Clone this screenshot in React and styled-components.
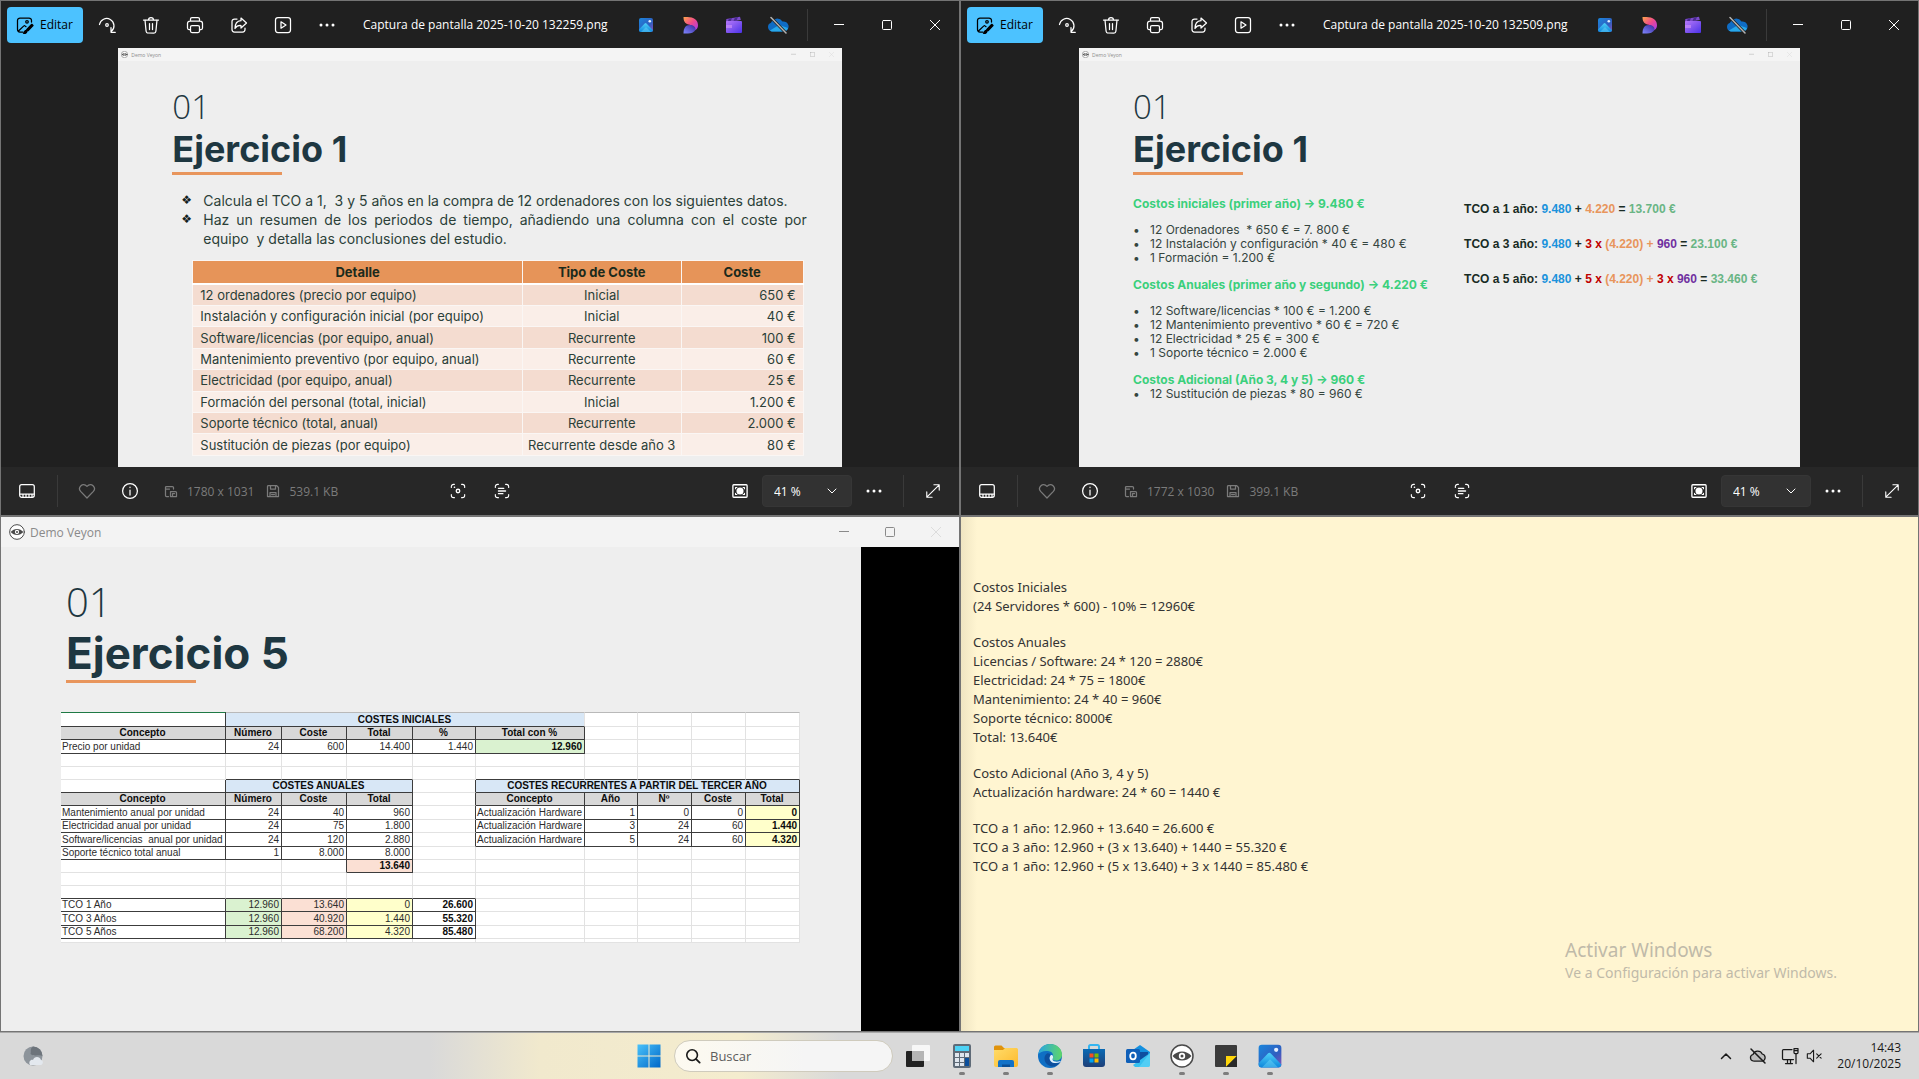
import React from "react";
import styled, { createGlobalStyle, css } from "styled-components";

const UI = `"Open Sans", "Noto Sans", sans-serif`;
const NOTE = `"Noto Sans", "Open Sans", sans-serif`;
const SLIDE = `Inter, "Open Sans", sans-serif`;
const SHEET = `"Liberation Sans", Arial, sans-serif`;

const Global = createGlobalStyle`
  * { box-sizing: border-box; }
  body { margin: 0; background: #202020; font-family: ${UI}; }
  button { border: 0; background: none; padding: 0; margin: 0; color: inherit; font: inherit; }
  p, h1, h2, ul { margin: 0; padding: 0; }
`;

/* ---------- shell ---------- */
const Screen = styled.div`
  display: flex;
  flex-direction: column;
  height: 100vh;
  overflow: hidden;
`;
const Desktop = styled.main`
  position: relative;
  flex: 1;
  min-height: 0;
  display: grid;
  grid-template-columns: minmax(0, 960fr) minmax(0, 959fr);
  grid-template-rows: minmax(0, 1fr) minmax(0, 1fr);
`;
const Window = styled.section`
  display: flex;
  flex-direction: column;
  min-width: 0;
  border: 1px solid #747474;
  background: ${(p) => p.$bg || "#202020"};
  overflow: hidden;
`;

/* ---------- icons ---------- */
const Svg = styled.svg`
  display: block;
  flex: none;
  fill: none;
  stroke: currentColor;
  stroke-width: 1.25;
  stroke-linecap: round;
  stroke-linejoin: round;
`;
const Glyph = ({ size = 18, box = 18, children, ...rest }) => (
  <Svg width={size} height={size} viewBox={`0 0 ${box} ${box}`} aria-hidden="true" {...rest}>
    {children}
  </Svg>
);
const EditIcon = () => (
  <Glyph>
    <path d="M7 16H4a2.500 2.500 0 0 1-2.500-2.500v-9A2.500 2.500 0 0 1 4 2h9a2.500 2.500 0 0 1 2.500 2.500V6M3 14.500l4.600-4.400a1.200 1.200 0 0 1 1.700 0l.7.6" />
    <circle cx="11" cy="5.800" r="1.300" />
    <path fill="currentColor" d="M15.800 8.300l1.200 1.200-5 5.200-1.800.6.6-1.900z M9.500 14.500c-1 .3-1 2-2 2.700 1.300.5 3.200 0 3.300-1.500z" />
  </Glyph>
);
const RotateIcon = () => (
  <Glyph>
    <path d="M1.500 8.500a7.300 7.300 0 1 1 12 6.800M13 11.500v4.800h4.300" />
    <circle cx="9" cy="9" r="1.300" />
  </Glyph>
);
const TrashIcon = () => (
  <Glyph>
    <path d="M1.500 4h15M6.500 4a2.500 2.500 0 0 1 5 0M3 4l1.100 11.200a2 2 0 0 0 2 1.800h5.800a2 2 0 0 0 2-1.800L15 4M7.500 7.500v6M10.500 7.500v6" />
  </Glyph>
);
const PrintIcon = () => (
  <Glyph>
    <path d="M4.500 5V3A1.500 1.500 0 0 1 6 1.500h6A1.500 1.500 0 0 1 13.500 3v2M4.500 13.500H3A1.500 1.500 0 0 1 1.500 12V7.500A2.500 2.500 0 0 1 4 5h10a2.500 2.500 0 0 1 2.500 2.500V12a1.500 1.500 0 0 1-1.500 1.500h-1.500" />
    <rect x="4.500" y="9.500" width="9" height="7" rx="1.500" />
  </Glyph>
);
const ShareIcon = () => (
  <Glyph>
    <path d="M7 3H4.500A2.500 2.500 0 0 0 2 5.500v8A2.500 2.500 0 0 0 4.500 16h8a2.500 2.500 0 0 0 2.500-2.500V12M11 2l5.500 5-5.500 5V9.500C8 9.300 6.300 10.300 5 12.500 5 8.300 7 5 11 4.700z" />
  </Glyph>
);
const PlayIcon = () => (
  <Glyph>
    <rect x="1.500" y="1.500" width="15" height="15" rx="2.500" />
    <path d="M7 5.800v6.400L12 9z" />
  </Glyph>
);
const DotsIcon = () => (
  <Glyph>
    <g fill="currentColor" stroke="none">
      <circle cx="3" cy="9" r="1.500" />
      <circle cx="9" cy="9" r="1.500" />
      <circle cx="15" cy="9" r="1.500" />
    </g>
  </Glyph>
);
const MinIcon = () => <Glyph size={10} box={10}><path d="M0 4.500h10" strokeWidth="1" /></Glyph>;
const MaxIcon = () => <Glyph size={10} box={10}><rect x=".5" y=".5" width="9" height="9" rx="1" strokeWidth="1" /></Glyph>;
const CloseIcon = () => <Glyph size={10} box={10}><path d="M.3.3l9.400 9.400M9.700.3L.3 9.700" strokeWidth="1" /></Glyph>;
const FilmIcon = () => (
  <Glyph size={16} box={16}>
    <rect x=".7" y="1.700" width="14.600" height="12.600" rx="2" />
    <path d="M1 11h14M4 13.800v-2M7 13.800v-2M10 13.800v-2M13 13.800v-2" />
  </Glyph>
);
const HeartIcon = () => (
  <Glyph>
    <path d="M9 16L2.600 9.400C-.6 5.800 4.600-.3 9 4.400c4.400-4.700 9.600 1.400 6.400 5z" />
  </Glyph>
);
const InfoIcon = () => (
  <Glyph>
    <circle cx="9" cy="9" r="7.400" />
    <path d="M9 8v5M9 5.200v.3" />
  </Glyph>
);
const DimsIcon = () => (
  <Glyph size={14} box={14}>
    <path d="M4.500 12.500h-2a1 1 0 0 1-1-1v-8a1 1 0 0 1 1-1h6a1 1 0 0 1 1 1V5M1.500 5h4M6.500 7.500h5a1 1 0 0 1 1 1v4h-6zM8.500 12v-2.500h2" />
  </Glyph>
);
const DiskIcon = () => (
  <Glyph size={14} box={14}>
    <path d="M2.500 1.500h8l2 2v9h-11v-10a1 1 0 0 1 1-1zM4.500 1.500v3.500h5V1.500M4 12.500V8.500h6v4M5.500 10.500h3" />
  </Glyph>
);
const CornersPath = "M1.500 5V4A2.500 2.500 0 0 1 4 1.500h1M13 1.500h1A2.500 2.500 0 0 1 16.500 4v1M16.500 13v1a2.500 2.500 0 0 1-2.500 2.500h-1M5 16.500H4A2.500 2.500 0 0 1 1.500 14v-1";
const LensIcon = () => (
  <Glyph size={16}>
    <path d={CornersPath} />
    <circle cx="9" cy="9" r="2" strokeWidth="1.500" />
    <path d="M5 4.800h.1" strokeWidth="1.800" />
  </Glyph>
);
const ScanTextIcon = () => (
  <Glyph size={16}>
    <path d={CornersPath} />
    <path d="M5 6h6M5 9h8M5 12h5" strokeWidth="1.500" />
  </Glyph>
);
const FitIcon = () => (
  <Glyph size={16}>
    <rect x="1" y="2" width="16" height="14" rx="1" strokeWidth="1.500" />
    <circle cx="9" cy="9" r="4" fill="currentColor" stroke="none" />
    <path d="M4 6.500V5h1.500M12.500 5H14v1.500M14 11.500V13h-1.500M5.500 13H4v-1.500" />
  </Glyph>
);
const ChevronIcon = () => <Glyph size={10} box={10}><path d="M1 3l4 4 4-4" strokeWidth="1" /></Glyph>;
const ExpandIcon = () => (
  <Glyph size={16}>
    <path d="M2 16L16 2M10 2h6v6M2 10v6h6" />
  </Glyph>
);
const VeyonIcon = ({ size = 16 }) => (
  <Svg width={size} height={size} viewBox="0 0 24 24" color="#4a4a4a" aria-hidden="true">
    <circle cx="12" cy="12" r="11" fill="#fff" strokeWidth="1.500" />
    <path d="M2.500 12c5-6 14-6 19 0-5 6-14 6-19 0z" fill="currentColor" stroke="none" />
    <circle cx="12" cy="12" r="3.200" fill="#fff" stroke="none" />
    <circle cx="12" cy="12" r="1.500" fill="currentColor" stroke="none" />
  </Svg>
);
const PhotosLogo = ({ size = 16 }) => (
  <Svg width={size} height={size} viewBox="0 0 16 16" aria-hidden="true">
    <g stroke="none">
      <rect x="1" y="1" width="14" height="14" rx="2" fill="url(#photoSky)" />
      <circle cx="11.800" cy="4.200" r="1.300" fill="#e4f0ff" />
      <path d="M1 12.500l5.700-6a1.200 1.200 0 0 1 1.800 0L15 13.200A2 2 0 0 1 13 15H3a2 2 0 0 1-2-2z" fill="url(#photoHill)" />
      <path d="M3 15l5-5 5 5z" fill="#7be0fb" opacity=".4" />
    </g>
  </Svg>
);
const DesignerLogo = () => (
  <Svg width="18" height="18" viewBox="0 0 18 18" aria-hidden="true">
    <g stroke="none">
      <path d="M2.500 1h4c6 0 11 3 10.500 9-.4 2.500-2 4-3 4-1-5-4-4.500-8-6C3 6.500 2.500 4 2.500 1z" fill="url(#wingTop)" />
      <path d="M2.500 17.500c0-5.500 2-8.500 6-8.500 4 0 6.500 2 6 5-1.500 2.500-4.500 3.500-7.500 3.500z" fill="url(#wingLow)" />
    </g>
  </Svg>
);
const ClipLogo = () => (
  <Svg width="18" height="18" viewBox="0 0 18 18" aria-hidden="true">
    <g stroke="none">
      <path d="M1.300 3L15 .8l.8 3.200L1 6.500z" fill="#7a4bc8" />
      <path d="M4 2.600l3-.5-1.500 3.500-3 .4zM10 1.600l3-.5-1.500 3.500-3 .5z" fill="#4a2a90" />
      <rect x="1" y="5" width="16" height="12" rx="1" fill="url(#clipBody)" />
      <path d="M1 9h6v3H1z" fill="#c98cf8" opacity=".7" />
    </g>
  </Svg>
);
const CloudOffLogo = () => (
  <Svg width="22" height="18" viewBox="0 0 22 18" aria-hidden="true">
    <path d="M5 15.500a4.500 4.500 0 0 1-1-8.700A6.500 6.500 0 0 1 15.500 5.500 5 5 0 0 1 17.500 15.500z" fill="#0f6cc4" stroke="none" />
    <path d="M3 14.500L12 9l9 3a4.300 4.300 0 0 1-3.500 3.500H5a4 4 0 0 1-2-1z" fill="#28a8ea" stroke="none" />
    <path d="M4 1.500l15 15.500" stroke="#202020" strokeWidth="3" />
    <path d="M4 1.500l15 15.500" stroke="#b4b4b4" strokeWidth="1.500" />
  </Svg>
);
const Gradients = () => (
  <svg width="0" height="0" style={{ position: "absolute" }} aria-hidden="true">
    <defs>
      <linearGradient id="photoSky" x1="0" y1="0" x2="1" y2="1"><stop offset="0" stopColor="#1a86dc" /><stop offset=".6" stopColor="#2f5fc0" /><stop offset="1" stopColor="#8a4fb8" /></linearGradient>
      <linearGradient id="photoHill" x1="0" y1="0" x2="0" y2="1"><stop offset="0" stopColor="#4fd0f8" /><stop offset="1" stopColor="#0e86dc" /></linearGradient>
      <linearGradient id="wingTop" x1="0" y1="0" x2="1" y2="1"><stop offset="0" stopColor="#ffa54a" /><stop offset=".5" stopColor="#f0488c" /><stop offset="1" stopColor="#a43cf0" /></linearGradient>
      <linearGradient id="wingLow" x1="0" y1="1" x2="1" y2="0"><stop offset="0" stopColor="#7f86ff" /><stop offset="1" stopColor="#3a2a9c" /></linearGradient>
      <linearGradient id="clipBody" x1="0" y1="0" x2="1" y2="1"><stop offset="0" stopColor="#b678f8" /><stop offset="1" stopColor="#4b32e8" /></linearGradient>
      <linearGradient id="winBlue" x1="0" y1="0" x2="1" y2="1"><stop offset="0" stopColor="#49c2fa" /><stop offset="1" stopColor="#0067c8" /></linearGradient>
      <linearGradient id="folder" x1="0" y1="0" x2="1" y2="1"><stop offset="0" stopColor="#ffdc6a" /><stop offset="1" stopColor="#fdb92c" /></linearGradient>
      <linearGradient id="edgeTop" x1="0" y1="0" x2="1" y2="0"><stop offset="0" stopColor="#2aa5e0" /><stop offset="1" stopColor="#5fd668" /></linearGradient>
      <linearGradient id="store" x1="0" y1="0" x2="0" y2="1"><stop offset="0" stopColor="#0a6ab4" /><stop offset="1" stopColor="#1e3f78" /></linearGradient>
    </defs>
  </svg>
);

/* ---------- photo viewer ---------- */
const ToolBar = styled.header`
  display: flex;
  align-items: center;
  height: 47px;
  flex: none;
  padding-left: 6px;
  color: #fff;
`;
const EditButton = styled.button`
  display: flex;
  align-items: center;
  gap: 6px;
  height: 36px;
  width: 76px;
  padding-left: 9px;
  margin-right: 2px;
  border-radius: 4px;
  background: #4cc2ff;
  color: #000;
  font-size: 12px;
`;
const IconButton = styled.button`
  display: flex;
  align-items: center;
  justify-content: center;
  width: ${(p) => p.$w || 44}px;
  height: 36px;
  flex: none;
  color: ${(p) => p.$tone || "inherit"};
`;
const FileName = styled.span`
  flex: 1;
  padding-left: 14px;
  font-size: 12px;
  white-space: nowrap;
`;
const Rule = styled.span`
  width: 1px;
  height: 32px;
  margin: 0 ${(p) => p.$gap}px;
  background: #3a3a3a;
`;
const Stage = styled.div`
  flex: 1;
  min-height: 0;
  display: flex;
  justify-content: center;
`;
const Shot = styled.article`
  height: 100%;
  aspect-ratio: ${(p) => p.$ratio};
  background: #eee;
  overflow: hidden;
`;
const ShotBar = styled.div`
  display: flex;
  align-items: center;
  gap: 3px;
  height: 13px;
  padding: 0 8px 0 3px;
  background: #f4f4f4;
  color: #8c8c8c;
  font-size: 5px;
`;
const ShotButtons = styled.span`
  display: flex;
  gap: 14px;
  margin-left: auto;
  color: #aaa;
  svg { width: 5px; height: 5px; }
  svg:last-child { color: #ddd; }
`;
const SlideHead = styled.div`
  padding: ${(p) => (p.$large ? "29px 0 0 65px" : "26px 0 0 54px")};
  color: #1e3741;
`;
const SlideNo = styled.p`
  font-family: ${UI};
  font-weight: 300;
  font-size: ${(p) => (p.$large ? 40 : 33)}px;
  line-height: ${(p) => (p.$large ? 52 : 40)}px;
`;
const SlideTitle = styled.h1`
  font-family: ${SLIDE};
  font-weight: 700;
  font-size: ${(p) => (p.$large ? 44 : 36)}px;
  line-height: ${(p) => (p.$large ? 50 : 45)}px;
`;
const Underline = styled.div`
  width: ${(p) => (p.$large ? 130 : 110)}px;
  height: 3px;
  margin-top: ${(p) => (p.$large ? 2 : 0)}px;
  background: #e8955c;
`;
const Brief = styled.ul`
  padding: 16px 35px 0 85px;
  list-style: none;
  font-family: ${SLIDE};
  font-size: 14px;
  line-height: 19px;
  color: #2b3f38;
  text-align: justify;
`;
const BriefItem = styled.li`
  &::before {
    content: "❖";
    float: left;
    width: 22px;
    margin-left: -22px;
    text-align: left;
    font-family: "DejaVu Sans", sans-serif;
    font-size: 12px;
    color: #12211c;
  }
`;
const CostTable = styled.table`
  width: calc(100% - 112px);
  height: 196px;
  margin: 12px 38px 0 74px;
  border-collapse: collapse;
  table-layout: fixed;
  font-family: ${SLIDE};
  font-size: 13px;
  line-height: 16px;
  color: #2b3f38;
  thead tr { height: 23px; }
  th, td { padding: 0 7px; border: 1px solid #faf6f4; text-align: center; white-space: nowrap; }
  th { background: #e69459; border-bottom: 2px solid #fff; color: #1b2a1c; font-weight: 700; }
  td:first-child { text-align: left; }
  td:last-child { text-align: right; }
  th:nth-child(2), td:nth-child(2) { padding: 0; }
  tbody tr:nth-child(odd) { background: #f4dcd0; }
  tbody tr:nth-child(even) { background: #faeee8; }
`;
const BottomBar = styled.footer`
  display: grid;
  grid-template-columns: 1fr auto 1fr;
  align-items: center;
  height: 48px;
  flex: none;
  padding: 0 4px;
  background: #272727;
  color: #fff;
  font-size: 12px;
`;
const BarGroup = styled.div`
  display: flex;
  align-items: center;
  justify-content: ${(p) => (p.$end ? "flex-end" : "flex-start")};
`;
const Meta = styled.span`
  display: flex;
  align-items: center;
  gap: 9px;
  margin-left: 12px;
  color: #7b7b7b;
  white-space: nowrap;
`;
const ZoomBox = styled.label`
  position: relative;
  display: block;
  width: 90px;
  height: 32px;
  svg { position: absolute; right: 15px; top: 11px; pointer-events: none; }
`;
const ZoomSelect = styled.select`
  width: 100%;
  height: 100%;
  padding: 0 11px;
  appearance: none;
  border: 1px solid #363636;
  border-radius: 4px;
  background: #323232;
  color: #fff;
  font: 12px ${UI};
`;

const Viewer = ({ file, dims, weight, ratio, children }) => (
  <Window>
    <ToolBar>
      <EditButton><EditIcon />Editar</EditButton>
      <IconButton aria-label="Girar"><RotateIcon /></IconButton>
      <IconButton aria-label="Eliminar"><TrashIcon /></IconButton>
      <IconButton aria-label="Imprimir"><PrintIcon /></IconButton>
      <IconButton aria-label="Compartir"><ShareIcon /></IconButton>
      <IconButton aria-label="Presentación"><PlayIcon /></IconButton>
      <IconButton aria-label="Más"><DotsIcon /></IconButton>
      <FileName>{file}</FileName>
      <IconButton aria-label="Fotos"><PhotosLogo /></IconButton>
      <IconButton aria-label="Designer"><DesignerLogo /></IconButton>
      <IconButton aria-label="Clipchamp"><ClipLogo /></IconButton>
      <IconButton aria-label="OneDrive"><CloudOffLogo /></IconButton>
      <Rule $gap={7} />
      <IconButton $w={48} aria-label="Minimizar"><MinIcon /></IconButton>
      <IconButton $w={48} aria-label="Maximizar"><MaxIcon /></IconButton>
      <IconButton $w={48} aria-label="Cerrar"><CloseIcon /></IconButton>
    </ToolBar>
    <Stage>
      <Shot $ratio={ratio}>
        <ShotBar>
          <VeyonIcon size={7} />Demo Veyon
          <ShotButtons><MinIcon /><MaxIcon /><CloseIcon /></ShotButtons>
        </ShotBar>
        <SlideHead>
          <SlideNo>01</SlideNo>
          <SlideTitle>Ejercicio 1</SlideTitle>
          <Underline />
        </SlideHead>
        {children}
      </Shot>
    </Stage>
    <BottomBar>
      <BarGroup>
        <IconButton aria-label="Tira de imágenes"><FilmIcon /></IconButton>
        <Rule $gap={8} />
        <IconButton $w={42} $tone="#7b7b7b" aria-label="Favorito"><HeartIcon /></IconButton>
        <IconButton aria-label="Información"><InfoIcon /></IconButton>
        <Meta><DimsIcon />{dims}</Meta>
        <Meta><DiskIcon />{weight}</Meta>
      </BarGroup>
      <BarGroup>
        <IconButton aria-label="Búsqueda visual"><LensIcon /></IconButton>
        <IconButton aria-label="Escanear texto"><ScanTextIcon /></IconButton>
      </BarGroup>
      <BarGroup $end>
        <IconButton aria-label="Ajustar"><FitIcon /></IconButton>
        <ZoomBox>
          <ZoomSelect aria-label="Zoom" defaultValue="41"><option value="41">41 %</option></ZoomSelect>
          <ChevronIcon />
        </ZoomBox>
        <IconButton aria-label="Más opciones"><DotsIcon /></IconButton>
        <Rule $gap={7} />
        <IconButton aria-label="Pantalla completa"><ExpandIcon /></IconButton>
      </BarGroup>
    </BottomBar>
  </Window>
);

const costs = [
  ["12 ordenadores (precio por equipo)", "Inicial", "650 €"],
  ["Instalación y configuración inicial (por equipo)", "Inicial", "40 €"],
  ["Software/licencias (por equipo, anual)", "Recurrente", "100 €"],
  ["Mantenimiento preventivo (por equipo, anual)", "Recurrente", "60 €"],
  ["Electricidad (por equipo, anual)", "Recurrente", "25 €"],
  ["Formación del personal (total, inicial)", "Inicial", "1.200 €"],
  ["Soporte técnico (total, anual)", "Recurrente", "2.000 €"],
  ["Sustitución de piezas (por equipo)", "Recurrente desde año 3", "80 €"],
];

const BriefSlide = () => (
  <>
    <Brief>
      <BriefItem>{"Calcula el TCO a 1,\u00a0 3 y 5 años en la compra de 12 ordenadores con los siguientes datos."}</BriefItem>
      <BriefItem>{"Haz un resumen de los periodos de tiempo, añadiendo una columna con el coste por equipo\u00a0 y detalla las conclusiones del estudio."}</BriefItem>
    </Brief>
    <CostTable>
      <colgroup><col style={{ width: "54%" }} /><col style={{ width: "26%" }} /><col /></colgroup>
      <thead><tr><th>Detalle</th><th>Tipo de Coste</th><th>Coste</th></tr></thead>
      <tbody>
        {costs.map((r) => <tr key={r[0]}>{r.map((c) => <td key={c}>{c}</td>)}</tr>)}
      </tbody>
    </CostTable>
  </>
);

/* ---------- solved slide ---------- */
const Answer = styled.div`
  display: grid;
  grid-template-columns: 331px 1fr;
  padding: 17px 0 0 54px;
`;
const Breakdown = styled.div`
  padding-top: 5px;
  font: 12px/14px ${SLIDE};
  color: #35453f;
  white-space: pre;
`;
const CostHead = styled.h2`
  font-size: 12px;
  line-height: 14px;
  font-weight: 700;
  color: #3bd07c;
  & + ul { margin-top: ${(p) => (p.$tight ? 0 : 12)}px; }
  ul + & { margin-top: 13px; }
`;
const CostList = styled.ul`
  list-style: none;
`;
const CostLine = styled.li`
  display: flex;
  &::before { content: "•"; width: 17px; }
`;
const Formula = styled.p`
  font: 700 12px/35px ${SHEET};
  color: #182b24;
  white-space: nowrap;
`;
const Tint = styled.span`
  color: ${(p) => ({ b: "#1b93dc", o: "#e8955c", g: "#69b584", r: "#c00000", p: "#7030a0" }[p.$c])};
`;

const AnswerSlide = () => (
  <Answer>
    <Breakdown>
      <CostHead>Costos iniciales (primer año) → 9.480 €</CostHead>
      <CostList>
        <CostLine>12 Ordenadores  * 650 € = 7. 800 €</CostLine>
        <CostLine>12 Instalación y configuración * 40 € = 480 €</CostLine>
        <CostLine>1 Formación = 1.200 €</CostLine>
      </CostList>
      <CostHead>Costos Anuales (primer año y segundo) → 4.220 €</CostHead>
      <CostList>
        <CostLine>12 Software/licencias * 100 € = 1.200 €</CostLine>
        <CostLine>12 Mantenimiento preventivo * 60 € = 720 €</CostLine>
        <CostLine>12 Electricidad * 25 € = 300 €</CostLine>
        <CostLine>1 Soporte técnico = 2.000 €</CostLine>
      </CostList>
      <CostHead $tight>Costos Adicional (Año 3, 4 y 5) → 960 €</CostHead>
      <CostList>
        <CostLine>12 Sustitución de piezas * 80 = 960 €</CostLine>
      </CostList>
    </Breakdown>
    <div>
      <Formula>TCO a 1 año: <Tint $c="b">9.480</Tint> + <Tint $c="o">4.220</Tint> = <Tint $c="g">13.700 €</Tint></Formula>
      <Formula>TCO a 3 año: <Tint $c="b">9.480</Tint> + <Tint $c="r">3 x</Tint> <Tint $c="o">(4.220) +</Tint> <Tint $c="p">960</Tint> = <Tint $c="g">23.100 €</Tint></Formula>
      <Formula>TCO a 5 año: <Tint $c="b">9.480</Tint> + <Tint $c="r">5 x</Tint> <Tint $c="o">(4.220) +</Tint> <Tint $c="r">3 x</Tint> <Tint $c="p">960</Tint> = <Tint $c="g">33.460 €</Tint></Formula>
    </div>
  </Answer>
);

/* ---------- Veyon window ---------- */
const VeyonBar = styled.header`
  display: flex;
  align-items: center;
  gap: 5px;
  height: 30px;
  flex: none;
  padding-left: 8px;
  background: #f3f3f3;
  color: #8a8a8a;
  font-size: 12px;
`;
const VeyonButtons = styled.div`
  display: flex;
  margin-left: auto;
`;
const VeyonBody = styled.div`
  flex: 1;
  min-height: 0;
  display: flex;
  background: #000;
`;
const VeyonSlide = styled.article`
  flex: 1;
  margin-right: 98px;
  background: #eee;
`;
const Sheet = styled.table`
  width: 739px;
  margin: 29px 0 0 60px;
  border-collapse: separate;
  border-spacing: 0;
  table-layout: fixed;
  background: #fff;
  font: 10px/12px ${SHEET};
  color: #222;
`;
const Row = styled.tr`
  height: ${(p) => p.$h}px;
`;
const Cell = styled.td`
  padding: 0 2px 0 1px;
  overflow: hidden;
  white-space: pre;
  line-height: ${(p) => (p.$sliver ? 3 : 12)}px;
  text-align: ${(p) => p.$align};
  font-weight: ${(p) => (p.$bold ? 700 : 400)};
  color: ${(p) => (p.$bold ? "#0c0c0c" : "#2c2c2c")};
  background: ${(p) => p.$fill || "#fff"};
  border-right: 1px solid ${(p) => (p.$right ? "#3c3c3c" : "#e2e2e2")};
  border-bottom: 1px solid ${(p) => (p.$bottom ? "#3c3c3c" : "#e2e2e2")};
  ${(p) => p.$top && css`border-top: ${p.$top};`}
`;

const BLUE = "#d8e7f6", GREY = "#d8d8d8", GREEN = "#daf2d0", PEACH = "#fbe0d4", YELLOW = "#ffffcb";
const blank = (n, o = {}) => Array.from({ length: n }, () => ({ t: "", ...o }));
const head = (...names) => names.map((t) => ({ t, bold: 1, align: "center", fill: GREY, right: 1, bottom: 1 }));
const label = (t) => ({ t, right: 1, bottom: 1 });
const num = (t, o = {}) => ({ t, align: "right", right: 1, bottom: 1, ...o });
const banner = (t, span, o = {}) => ({ t, span, bold: 1, align: "center", fill: BLUE, bottom: 1, ...o });
const hw = (a, n, c, t) => [label("Actualización Hardware"), num(a), num(n), num(c), num(t, { bold: 1, fill: YELLOW })];
const tco = (l, a, b, c, t) => [label(l), num(a, { fill: GREEN }), num(b, { fill: PEACH }), num(c, { fill: YELLOW }), num(t, { bold: 1 }), ...blank(5)];
const TOP = "1px solid #b9b9b9";
const sheetRows = [
  [15, [{ t: "", right: 1, bottom: 1, top: "1px solid #1f7a45" }, banner("COSTES INICIALES", 5, { top: TOP }), ...blank(4, { top: TOP })]],
  [13, [...head("Concepto", "Número", "Coste", "Total", "%", "Total con %"), ...blank(4)]],
  [14, [label("Precio por unidad"), num("24"), num("600"), num("14.400"), num("1.440"), num("12.960", { bold: 1, fill: GREEN }), ...blank(4)]],
  [13, blank(10)],
  [13, [...blank(1), ...blank(3, { bottom: 1 }), ...blank(1), ...blank(5, { bottom: 1 })]],
  [13, [{ t: "", right: 1, bottom: 1 }, banner("COSTES ANUALES", 3, { right: 1 }), { t: "", right: 1 }, banner("COSTES RECURRENTES A PARTIR DEL TERCER AÑO", 5, { right: 1 })]],
  [13, [...head("Concepto", "Número", "Coste", "Total"), { t: "", right: 1 }, ...head("Concepto", "Año", "Nº", "Coste", "Total")]],
  [14, [label("Mantenimiento anual por unidad"), num("24"), num("40"), num("960"), { t: "", right: 1 }, ...hw("1", "0", "0", "0")]],
  [13, [label("Electricidad anual por unidad"), num("24"), num("75"), num("1.800"), { t: "", right: 1 }, ...hw("3", "24", "60", "1.440")]],
  [14, [label("Software/licencias  anual por unidad"), num("24"), num("120"), num("2.880"), { t: "", right: 1 }, ...hw("5", "24", "60", "4.320")]],
  [13, [label("Soporte técnico total anual"), num("1"), num("8.000"), num("8.000"), ...blank(6)]],
  [13, [...blank(2), { t: "", right: 1 }, num("13.640", { bold: 1, fill: PEACH }), ...blank(6)]],
  [13, blank(10)],
  [13, [...blank(5, { bottom: 1 }), ...blank(5)]],
  [13, tco("TCO 1 Año", "12.960", "13.640", "0", "26.600")],
  [14, tco("TCO 3 Años", "12.960", "40.920", "1.440", "55.320")],
  [13, tco("TCO 5 Años", "12.960", "68.200", "4.320", "85.480")],
  [4, blank(10, { sliver: 1 })],
];
const colWidths = [165, 56, 65, 66, 63, 109, 53, 54, 54, 54];

const VeyonWindow = () => (
  <Window>
    <VeyonBar>
      <VeyonIcon />Demo Veyon
      <VeyonButtons>
        <IconButton $w={46} aria-label="Minimizar"><MinIcon /></IconButton>
        <IconButton $w={46} aria-label="Maximizar"><MaxIcon /></IconButton>
        <IconButton $w={46} $tone="#dcdcdc" aria-label="Cerrar"><CloseIcon /></IconButton>
      </VeyonButtons>
    </VeyonBar>
    <VeyonBody>
      <VeyonSlide>
        <SlideHead $large>
          <SlideNo $large>01</SlideNo>
          <SlideTitle $large>Ejercicio 5</SlideTitle>
          <Underline $large />
        </SlideHead>
        <Sheet>
          <colgroup>{colWidths.map((w, i) => <col key={i} style={{ width: w }} />)}</colgroup>
          <tbody>
            {sheetRows.map(([h, cells], i) => (
              <Row key={i} $h={h}>
                {cells.map((c, j) => (
                  <Cell key={j} colSpan={c.span} $align={c.align || "left"} $bold={c.bold} $fill={c.fill} $right={c.right} $bottom={c.bottom} $top={c.top} $sliver={c.sliver}>{c.t}</Cell>
                ))}
              </Row>
            ))}
          </tbody>
        </Sheet>
      </VeyonSlide>
    </VeyonBody>
  </Window>
);

/* ---------- sticky note ---------- */
const Note = styled.div`
  flex: 1;
  display: flex;
  flex-direction: column;
  gap: 17px;
  padding: 61px 12px 0 12px;
  background: linear-gradient(90deg, #efe5c2 0, #fff5d1 16px);
  color: #333;
  font-family: ${NOTE};
  font-size: 13px;
  line-height: 19px;
`;
const NoteBlock = styled.p`
  white-space: pre-line;
`;
const Watermark = styled.div`
  position: absolute;
  right: 82px;
  bottom: 49px;
  color: #bfbaa9;
  font-family: ${NOTE};
  font-size: 14px;
  line-height: 20px;
  pointer-events: none;
`;
const WatermarkTitle = styled.p`
  font-size: 19px;
  line-height: 26px;
`;
const noteText = [
  "Costos Iniciales\n(24 Servidores * 600) - 10% = 12960€",
  "Costos Anuales\nLicencias / Software: 24 * 120 = 2880€\nElectricidad: 24 * 75 = 1800€\nMantenimiento: 24 * 40 = 960€\nSoporte técnico: 8000€\nTotal: 13.640€",
  "Costo Adicional (Año 3, 4 y 5)\nActualización hardware: 24 * 60 = 1440 €",
  "TCO a 1 año: 12.960 + 13.640 = 26.600 €\nTCO a 3 año: 12.960 + (3 x 13.640) + 1440 = 55.320 €\nTCO a 1 año: 12.960 + (5 x 13.640) + 3 x 1440 = 85.480 €",
];

/* ---------- taskbar ---------- */
const Taskbar = styled.nav`
  display: grid;
  grid-template-columns: 1fr auto 1fr;
  align-items: center;
  height: 47px;
  flex: none;
  padding: 0 11px;
  border-top: 1px solid #a8a8a8;
  background: linear-gradient(90deg, #d9d9d9 0, #d9d9d9 430px, #f1e9cd 540px, #f4ecce 740px, #d9d9d9 840px);
  color: #1a1a1a;
`;
const Apps = styled.div`
  display: flex;
  align-items: center;
  height: 100%;
`;
const AppButton = styled.button`
  position: relative;
  display: flex;
  align-items: center;
  justify-content: center;
  width: 44px;
  height: 46px;
  &::after {
    content: "";
    position: absolute;
    bottom: 4px;
    left: 19px;
    width: 6px;
    height: 3px;
    border-radius: 2px;
    background: ${(p) => (p.$open ? "#7d7d7d" : "transparent")};
  }
`;
const SearchBox = styled.label`
  display: flex;
  align-items: center;
  gap: 9px;
  width: 219px;
  height: 32px;
  margin: 0 3px;
  padding: 0 10px;
  border: 1px solid #cfcbbd;
  border-radius: 16px;
  background: linear-gradient(90deg, #fdfaf0, #f5f5f5 60%);
`;
const SearchInput = styled.input`
  flex: 1;
  min-width: 0;
  padding: 0;
  border: 0;
  outline: 0;
  background: transparent;
  font: 13px ${UI};
  &::placeholder { color: #5c5c5c; opacity: 1; }
`;
const Tray = styled.div`
  display: flex;
  align-items: center;
  justify-content: flex-end;
`;
const TrayButton = styled.button`
  display: flex;
  justify-content: center;
  width: ${(p) => p.$w}px;
`;
const Clock = styled.time`
  margin: 0 7px 0 15px;
  font-size: 12px;
  line-height: 16px;
  text-align: right;
`;

const WeatherIcon = () => (
  <Svg width="24" height="24" viewBox="0 0 24 24" aria-hidden="true">
    <g stroke="none">
      <circle cx="12" cy="12" r="9.500" fill="#8d949b" />
      <path d="M12 2.500a9.500 9.500 0 0 1 9.500 9.500c-3-2-8 1-12-2 1-3-1-5 2.500-7.500z" fill="#6d747b" />
      <path d="M9 21c-2-3 1-6 3-5 1-4 7-4 8 0 2 0 3 4 0 5z" fill="#e3e8ee" />
    </g>
  </Svg>
);
const StartLogo = () => (
  <Svg width="24" height="24" viewBox="0 0 24 24" aria-hidden="true">
    <path stroke="none" fill="url(#winBlue)" d="M.5.5h11v11H.5zM12.500.5h11v11h-11zM.5 12.500h11v11H.5zM12.500 12.500h11v11h-11z" />
  </Svg>
);
const TaskViewLogo = () => (
  <Svg width="24" height="24" viewBox="0 0 24 24" aria-hidden="true">
    <g stroke="none">
      <rect x="0" y="7" width="18" height="16" rx="1" fill="#222" />
      <rect x="6" y="1" width="18" height="16" rx="1" fill="#f7f7f7" />
      <rect x="6" y="7" width="12" height="10" fill="#b5b5b5" />
    </g>
  </Svg>
);
const CalcLogo = () => (
  <Svg width="24" height="24" viewBox="0 0 24 24" aria-hidden="true">
    <g stroke="none">
      <rect x="3" y="0" width="18" height="24" rx="2" fill="#5f6b78" />
      <rect x="5" y="2" width="14" height="5" fill="#4dd2f5" />
      <path fill="#dfe6ee" d="M5 9h4v4H5zM10 9h4v4h-4zM15 9h4v4h-4zM5 14h4v4H5zM10 14h4v4h-4zM5 19h4v3H5zM10 19h4v3h-4z" />
      <rect x="15" y="14" width="4" height="8" fill="#0b4f9c" />
    </g>
  </Svg>
);
const FolderLogo = () => (
  <Svg width="24" height="24" viewBox="0 0 24 24" aria-hidden="true">
    <g stroke="none">
      <path d="M0 3a1.500 1.500 0 0 1 1.500-1.500h6L10 4h12v4H0z" fill="#e0930c" />
      <path d="M0 6h9l2-2h11.500A1.500 1.500 0 0 1 24 5.500V21a2 2 0 0 1-2 2H2a2 2 0 0 1-2-2z" fill="url(#folder)" />
      <path d="M4 23v-5a2 2 0 0 1 2-2h12a2 2 0 0 1 2 2v5z" fill="#1272c8" />
      <path d="M8 23v-2.500h8V23z" fill="#0a4f96" />
    </g>
  </Svg>
);
const EdgeLogo = () => (
  <Svg width="24" height="24" viewBox="0 0 24 24" aria-hidden="true">
    <g stroke="none">
      <circle cx="12" cy="12" r="12" fill="#0f6fc4" />
      <path d="M.4 10C1.500 4 6 0 12 0c7 0 12 5 12 10.500 0 4-3 6-6 6-2.500 0-4-1-3.500-2 1.500-2 1-7-4.500-7.500C5.500 6.500 2 8 .4 10z" fill="url(#edgeTop)" />
      <path d="M9 9.500C4.500 12 6 21 13.500 22.500c3.500.5 7-1.500 9-4.500-4 2-8 1.500-10-1-1.500-2-1.500-4 0-5.500C12.500 9.500 10.500 9 9 9.500z" fill="#0d4f9e" />
      <path d="M12.500 11.500c-1.500 2-1 4.500.5 6 2 2 6 2 9.500.5.500-.7-.3-1-.8-.7-3 1-7 .2-7.200-1.800 0-1 .8-1.500.5-3-.3-1.300-1.500-1.800-2.500-1z" fill="#dff0fa" />
    </g>
  </Svg>
);
const StoreLogo = () => (
  <Svg width="24" height="24" viewBox="0 0 24 24" aria-hidden="true">
    <path d="M7 5V2.500A1.500 1.500 0 0 1 8.500 1h7A1.500 1.500 0 0 1 17 2.500V5" stroke="#35b5f0" strokeWidth="2" />
    <g stroke="none">
      <path d="M1 5h22v15a3 3 0 0 1-3 3H4a3 3 0 0 1-3-3z" fill="url(#store)" />
      <path d="M7.500 9.500h4v4h-4z" fill="#f25022" /><path d="M12.500 9.500h4v4h-4z" fill="#7fba00" />
      <path d="M7.500 14.500h4v4h-4z" fill="#00a4ef" /><path d="M12.500 14.500h4v4h-4z" fill="#ffb900" />
    </g>
  </Svg>
);
const OutlookLogo = () => (
  <Svg width="24" height="24" viewBox="0 0 24 24" aria-hidden="true">
    <g stroke="none">
      <path d="M4 8l10-7 10 7v6H4z" fill="#1490df" />
      <path d="M9 8h13v8H9z" fill="#0f4fa0" />
      <path d="M24 9v12a2 2 0 0 1-2 2H9l-2-2z" fill="#35c0f0" />
      <path d="M24 9v12a2 2 0 0 1-2 2h-9z" fill="#6fdcfa" opacity=".5" />
      <rect x="0" y="5" width="14" height="14" rx="1.500" fill="#0f5fb8" />
    </g>
    <ellipse cx="7" cy="12" rx="2.800" ry="3.300" stroke="#fff" strokeWidth="1.800" />
  </Svg>
);
const NotesLogo = () => (
  <Svg width="24" height="24" viewBox="0 0 24 24" aria-hidden="true">
    <g stroke="none">
      <rect x="1" y="1" width="22" height="22" rx="1" fill="#3b3b3b" />
      <path d="M12 12h11l-11 11z" fill="#ffd60a" />
      <path d="M23 12v11H12z" fill="#2a2a2a" />
    </g>
  </Svg>
);

const SystemTray = () => (
  <Tray>
    <TrayButton $w={32} aria-label="Iconos ocultos"><Glyph size={12} box={12}><path d="M1.500 8.500L6 4l4.500 4.500" strokeWidth="1.500" /></Glyph></TrayButton>
    <TrayButton $w={32} aria-label="OneDrive">
      <Glyph size={18}>
        <path d="M4.500 14a3.300 3.300 0 0 1-.5-6.500A5 5 0 0 1 13.200 7 3.600 3.600 0 0 1 13.500 14z" fill="#bcbcbc" />
        <path d="M2 2l14 14" strokeWidth="1.500" />
      </Glyph>
    </TrayButton>
    <TrayButton $w={32} aria-label="Red">
      <Glyph size={18}><path d="M11 2.500H2.500a1 1 0 0 0-1 1v8a1 1 0 0 0 1 1h10M4.500 16.500h7M6.500 13v3M9.500 13v3M13 1.500h4v4a1 1 0 0 1-1 1h-2a1 1 0 0 1-1-1zM15 6.500v10M13 3.500h4" /></Glyph>
    </TrayButton>
    <TrayButton $w={16} aria-label="Volumen">
      <Glyph size={16}><path d="M1.500 6.500h3l4-4v13l-4-4h-3zM12 6.500l5 5M17 6.500l-5 5" /></Glyph>
    </TrayButton>
    <Clock dateTime="2025-10-20T14:43">14:43<br />20/10/2025</Clock>
  </Tray>
);

export default function App() {
  return (
    <Screen>
      <Global />
      <Gradients />
      <Desktop>
        <Viewer file="Captura de pantalla 2025-10-20 132259.png" dims="1780 x 1031" weight="539.1 KB" ratio="1780 / 1031">
          <BriefSlide />
        </Viewer>
        <Viewer file="Captura de pantalla 2025-10-20 132509.png" dims="1772 x 1030" weight="399.1 KB" ratio="1772 / 1030">
          <AnswerSlide />
        </Viewer>
        <VeyonWindow />
        <Window $bg="#fff5d1">
          <Note>
            {noteText.map((t) => <NoteBlock key={t}>{t}</NoteBlock>)}
          </Note>
        </Window>
        <Watermark>
          <WatermarkTitle>Activar Windows</WatermarkTitle>
          <p>Ve a Configuración para activar Windows.</p>
        </Watermark>
      </Desktop>
      <Taskbar>
        <Apps><AppButton aria-label="Widgets"><WeatherIcon /></AppButton></Apps>
        <Apps>
          <AppButton aria-label="Inicio"><StartLogo /></AppButton>
          <SearchBox>
            <Glyph size={16}><circle cx="8" cy="8" r="6" strokeWidth="1.800" /><path d="M12.500 12.500l4 4" strokeWidth="2" /></Glyph>
            <SearchInput type="text" placeholder="Buscar" aria-label="Buscar" />
          </SearchBox>
          <AppButton aria-label="Vista de tareas"><TaskViewLogo /></AppButton>
          <AppButton $open aria-label="Calculadora"><CalcLogo /></AppButton>
          <AppButton $open aria-label="Explorador"><FolderLogo /></AppButton>
          <AppButton $open aria-label="Edge"><EdgeLogo /></AppButton>
          <AppButton aria-label="Store"><StoreLogo /></AppButton>
          <AppButton aria-label="Outlook"><OutlookLogo /></AppButton>
          <AppButton $open aria-label="Veyon"><VeyonIcon size={24} /></AppButton>
          <AppButton $open aria-label="Notas"><NotesLogo /></AppButton>
          <AppButton $open aria-label="Fotos"><PhotosLogo size={26} /></AppButton>
        </Apps>
        <SystemTray />
      </Taskbar>
    </Screen>
  );
}
